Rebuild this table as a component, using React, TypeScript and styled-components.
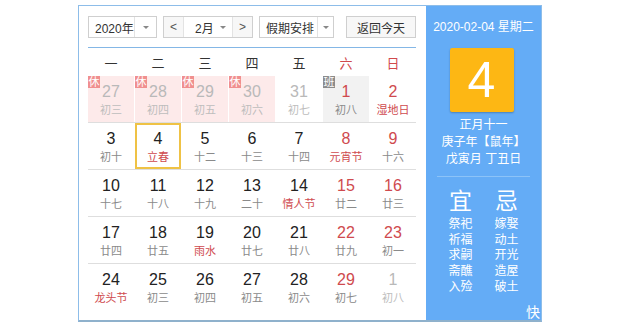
import React from "react";
import styled, { createGlobalStyle, css } from "styled-components";

const GlobalStyle = createGlobalStyle`
  body {
    margin: 0;
    background: #ffffff;
    font-family: "Liberation Sans", "Noto Sans CJK SC", sans-serif;
  }
`;

const Page = styled.div`
  width: 640px;
  height: 327px;
  padding: 5px 0 0 78px;
  box-sizing: border-box;
  overflow: hidden;
`;

const Calendar = styled.div`
  display: flex;
  width: 464px;
  height: 317px;
  border: 1px solid #8dbde9;
  border-bottom: 2px solid #8fb1cc;
  box-sizing: border-box;
`;

const Main = styled.div`
  width: 347px;
  padding: 10px 10px 0 9px;
  box-sizing: border-box;
  background: #ffffff;
`;

const Toolbar = styled.div`
  display: flex;
  align-items: center;
  height: 22px;
  padding-bottom: 9px;
  border-bottom: 1px solid #84b7e6;
`;

const Select = styled.div<{ $width: number; $arrow: number; $gap?: number }>`
  display: flex;
  width: ${(p) => p.$width}px;
  height: 22px;
  margin-left: ${(p) => p.$gap ?? 0}px;
  border: 1px solid #cfcfcf;
  box-sizing: border-box;
  background: #fff;
  font-size: 12px;
  color: #333;
  & > span:first-child {
    flex: 1;
    display: flex;
    align-items: center;
    padding-left: 6px;
  }
  & > span:last-child {
    width: ${(p) => p.$arrow}px;
    border-left: 1px solid #e3e3e3;
    display: flex;
    align-items: center;
    justify-content: center;
  }
`;

const MonthGroup = styled.div`
  display: flex;
  width: 90px;
  height: 22px;
  margin-left: 6px;
  border: 1px solid #cfcfcf;
  box-sizing: border-box;
  font-size: 12px;
  color: #333;
`;

const Step = styled.span`
  width: 19px;
  display: flex;
  align-items: center;
  justify-content: center;
  background: #f7f7f7;
  color: #555;
  font-size: 12px;
  &:first-child {
    border-right: 1px solid #e3e3e3;
  }
  &:last-child {
    border-left: 1px solid #e3e3e3;
  }
`;

const MonthValue = styled.span`
  flex: 1;
  display: flex;
  align-items: center;
  justify-content: space-between;
  padding: 0 6px 0 11px;
`;

const Caret = styled.i`
  width: 0;
  height: 0;
  border-left: 3px solid transparent;
  border-right: 3px solid transparent;
  border-top: 3px solid #888;
`;

const TodayButton = styled.button`
  margin-left: auto;
  width: 70px;
  height: 22px;
  border: 1px solid #cfcfcf;
  background: #f7f7f7;
  font-family: inherit;
  font-size: 12px;
  color: #333;
  padding: 0;
`;

const WeekHead = styled.div`
  display: grid;
  grid-template-columns: repeat(7, 1fr);
  column-gap: 1px;
  height: 28px;
  align-items: center;
`;

const WeekName = styled.span<{ $red?: boolean }>`
  text-align: center;
  font-size: 13px;
  color: ${(p) => (p.$red ? "#d0494c" : "#333")};
`;

const Row = styled.div`
  display: grid;
  grid-template-columns: repeat(7, 1fr);
  column-gap: 1px;
  height: 47px;
  box-sizing: border-box;
  border-bottom: 1px solid #dedede;
  &:last-child {
    border-bottom: none;
  }
`;

type Tone = "prev" | "normal" | "weekend";

const Cell = styled.div<{ $bg?: "rest" | "work"; $selected?: boolean }>`
  position: relative;
  display: flex;
  flex-direction: column;
  align-items: center;
  padding-top: 7px;
  box-sizing: border-box;
  height: 46px;
  ${(p) => p.$bg === "rest" && css`background: #fdeaea;`}
  ${(p) => p.$bg === "work" && css`background: #f2f2f2;`}
  ${(p) =>
    p.$selected &&
    css`
      border: 2px solid #efc245;
      padding-top: 5px;
    `}
`;

const DayNum = styled.span<{ $tone: Tone }>`
  font-size: 16px;
  line-height: 18px;
  color: ${(p) =>
    p.$tone === "prev" ? "#b9b9b9" : p.$tone === "weekend" ? "#cf4a4e" : "#222"};
`;

const Lunar = styled.span<{ $tone: Tone; $red?: boolean }>`
  margin-top: 3px;
  font-size: 11px;
  line-height: 13px;
  color: ${(p) => (p.$red ? "#cf4a4e" : p.$tone === "prev" ? "#bdbdbd" : "#8a8a8a")};
`;

const Badge = styled.span<{ $kind: "rest" | "work" }>`
  position: absolute;
  top: 0;
  left: 0;
  width: 12px;
  height: 12px;
  font-size: 11px;
  line-height: 12px;
  text-align: center;
  color: #fff;
  background: ${(p) => (p.$kind === "rest" ? "#f08f8f" : "#8c8c8c")};
`;

const Side = styled.div`
  position: relative;
  flex: 1;
  background: #64acf6;
  color: #fff;
  display: flex;
  flex-direction: column;
  align-items: center;
  padding-top: 14px;
  overflow: hidden;
`;

const SideDate = styled.div`
  font-size: 12px;
  line-height: 14px;
`;

const BigDay = styled.div`
  margin-top: 14px;
  width: 64px;
  height: 64px;
  border-radius: 2px;
  background: #fdb714;
  box-shadow: 0 1px 2px rgba(0, 0, 0, 0.25);
  display: flex;
  align-items: center;
  justify-content: center;
  font-size: 50px;
  line-height: 1;
  margin-right: 4px;
`;

const LunarInfo = styled.div`
  margin-top: 5px;
  font-size: 12px;
  line-height: 17px;
  text-align: center;
`;

const Divider = styled.div`
  margin-top: 8px;
  width: 93px;
  height: 1px;
  background: #8cc3f8;
`;

const Advice = styled.div`
  display: flex;
  gap: 22px;
  margin-top: 9px;
`;

const AdviceCol = styled.div`
  display: flex;
  flex-direction: column;
  align-items: center;
  font-size: 12px;
  line-height: 15.7px;
  & > strong {
    font-size: 23px;
    line-height: 30px;
    font-weight: normal;
    margin-bottom: 1px;
  }
`;

const Watermark = styled.span`
  position: absolute;
  right: 1px;
  bottom: 0;
  font-size: 14px;
  line-height: 16px;
  color: #fff;
`;

type Day = {
  n: number;
  l: string;
  tone: Tone;
  red?: boolean;
  bg?: "rest" | "work";
  badge?: "休" | "班";
  sel?: boolean;
};

const d = (n: number, l: string, tone: Tone, extra: Partial<Day> = {}): Day => ({
  n,
  l,
  tone,
  ...extra,
});

const weeks: Day[][] = [
  [
    d(27, "初三", "prev", { bg: "rest", badge: "休" }),
    d(28, "初四", "prev", { bg: "rest", badge: "休" }),
    d(29, "初五", "prev", { bg: "rest", badge: "休" }),
    d(30, "初六", "prev", { bg: "rest", badge: "休" }),
    d(31, "初七", "prev"),
    d(1, "初八", "weekend", { bg: "work", badge: "班" }),
    d(2, "湿地日", "weekend", { red: true }),
  ],
  [
    d(3, "初十", "normal"),
    d(4, "立春", "normal", { red: true, sel: true }),
    d(5, "十二", "normal"),
    d(6, "十三", "normal"),
    d(7, "十四", "normal"),
    d(8, "元宵节", "weekend", { red: true }),
    d(9, "十六", "weekend"),
  ],
  [
    d(10, "十七", "normal"),
    d(11, "十八", "normal"),
    d(12, "十九", "normal"),
    d(13, "二十", "normal"),
    d(14, "情人节", "normal", { red: true }),
    d(15, "廿二", "weekend"),
    d(16, "廿三", "weekend"),
  ],
  [
    d(17, "廿四", "normal"),
    d(18, "廿五", "normal"),
    d(19, "雨水", "normal", { red: true }),
    d(20, "廿七", "normal"),
    d(21, "廿八", "normal"),
    d(22, "廿九", "weekend"),
    d(23, "初一", "weekend"),
  ],
  [
    d(24, "龙头节", "normal", { red: true }),
    d(25, "初三", "normal"),
    d(26, "初四", "normal"),
    d(27, "初五", "normal"),
    d(28, "初六", "normal"),
    d(29, "初七", "weekend"),
    d(1, "初八", "prev"),
  ],
];

const weekNames = ["一", "二", "三", "四", "五", "六", "日"];

const App: React.FC = () => {
  return (
    <Page>
      <GlobalStyle />
      <Calendar>
        <Main>
          <Toolbar>
            <Select $width={69} $arrow={21}>
              <span>2020年</span>
              <span>
                <Caret />
              </span>
            </Select>
            <MonthGroup>
              <Step>&lt;</Step>
              <MonthValue>
                2月
                <Caret />
              </MonthValue>
              <Step>&gt;</Step>
            </MonthGroup>
            <Select $width={75} $arrow={15} $gap={6}>
              <span>假期安排</span>
              <span>
                <Caret />
              </span>
            </Select>
            <TodayButton>返回今天</TodayButton>
          </Toolbar>
          <WeekHead>
            {weekNames.map((w, i) => (
              <WeekName key={w} $red={i > 4}>
                {w}
              </WeekName>
            ))}
          </WeekHead>
          {weeks.map((week, wi) => (
            <Row key={wi}>
              {week.map((day, di) => (
                <Cell key={di} $bg={day.bg} $selected={day.sel}>
                  {day.badge && (
                    <Badge $kind={day.badge === "休" ? "rest" : "work"}>{day.badge}</Badge>
                  )}
                  <DayNum $tone={day.tone}>{day.n}</DayNum>
                  <Lunar $tone={day.tone} $red={day.red}>
                    {day.l}
                  </Lunar>
                </Cell>
              ))}
            </Row>
          ))}
        </Main>
        <Side>
          <SideDate>2020-02-04 星期二</SideDate>
          <BigDay>4</BigDay>
          <LunarInfo>
            正月十一
            <br />
            庚子年【鼠年】
            <br />
            戊寅月 丁丑日
          </LunarInfo>
          <Divider />
          <Advice>
            <AdviceCol>
              <strong>宜</strong>
              <span>祭祀</span>
              <span>祈福</span>
              <span>求嗣</span>
              <span>斋醮</span>
              <span>入殓</span>
            </AdviceCol>
            <AdviceCol>
              <strong>忌</strong>
              <span>嫁娶</span>
              <span>动土</span>
              <span>开光</span>
              <span>造屋</span>
              <span>破土</span>
            </AdviceCol>
          </Advice>
          <Watermark>快</Watermark>
        </Side>
      </Calendar>
    </Page>
  );
};

export default App;
